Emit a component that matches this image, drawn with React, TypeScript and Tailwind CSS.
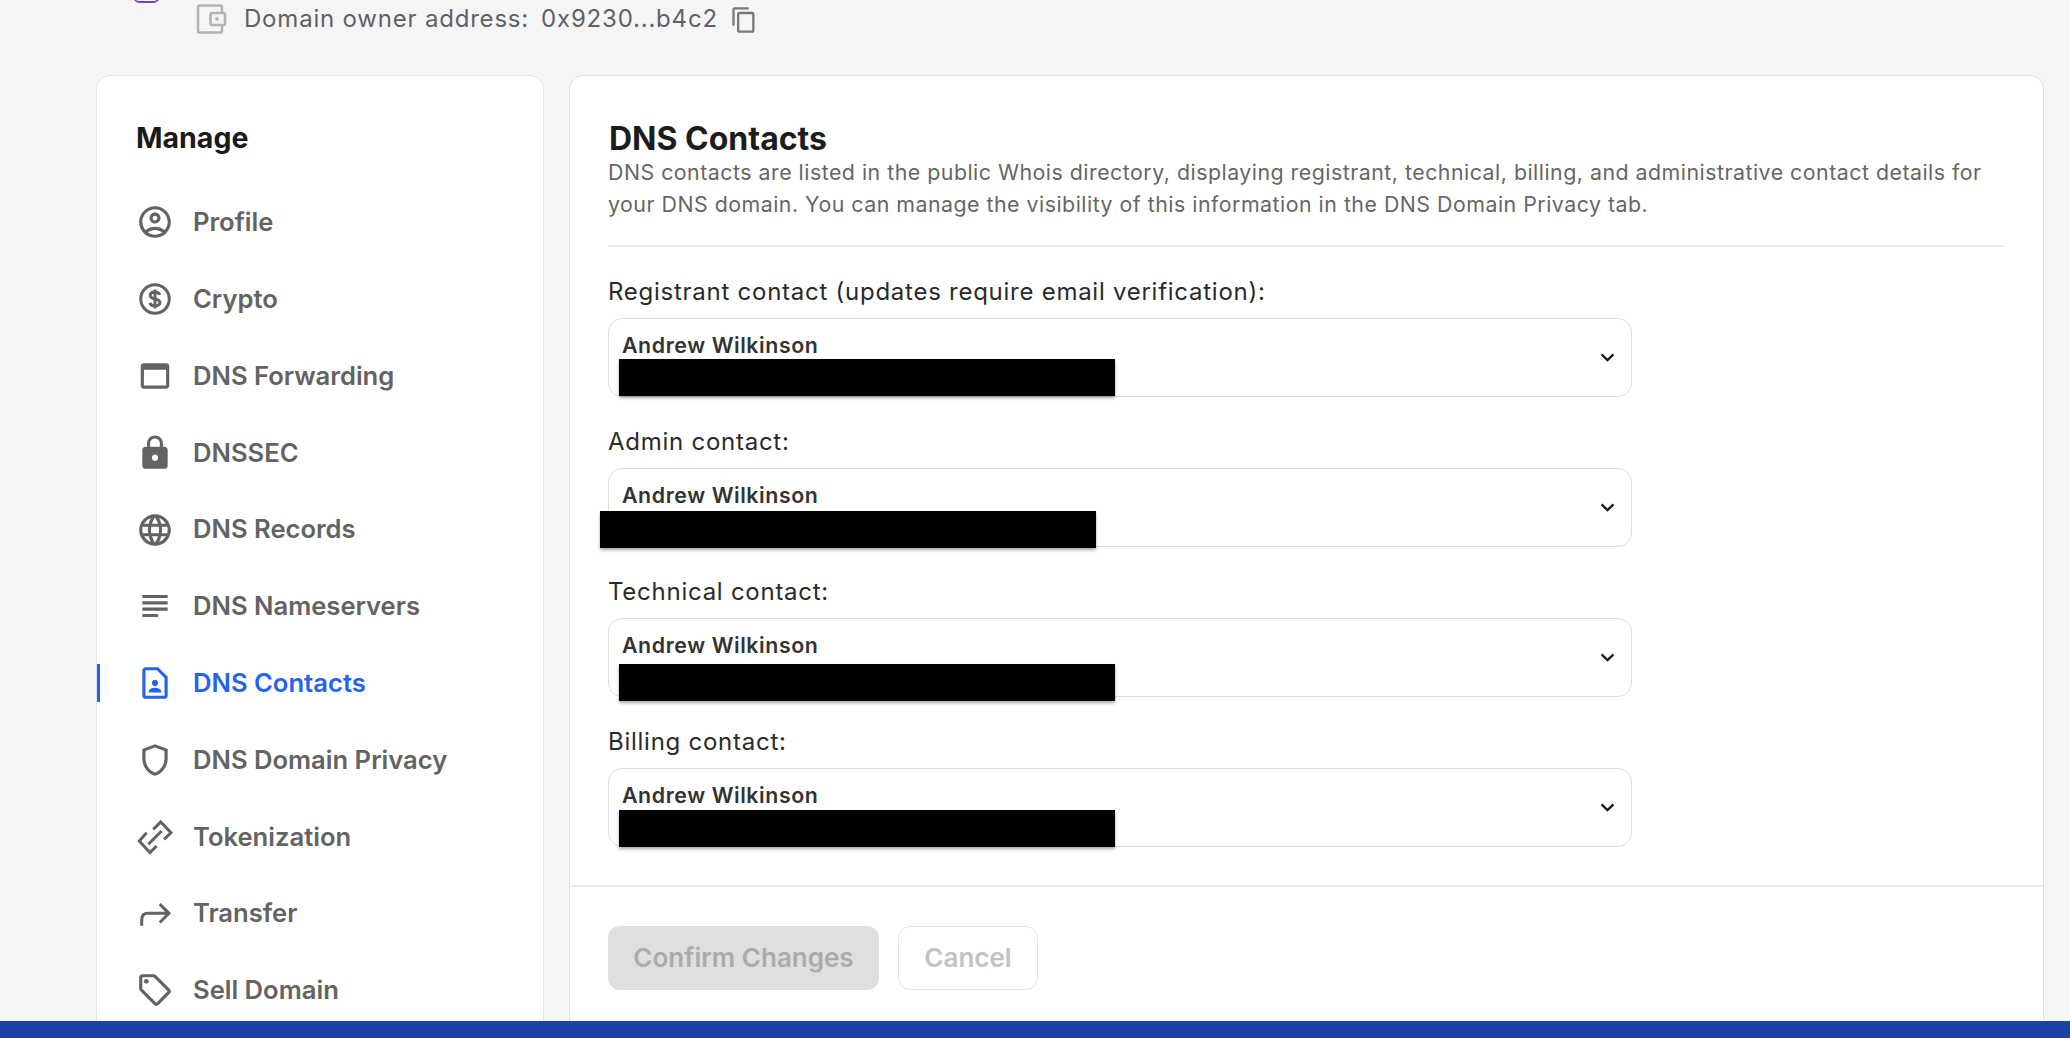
import React from "react";
import {
  MdOutlineAccountCircle,
  MdOutlineWebAsset,
  MdLock,
  MdOutlineLanguage,
  MdOutlineSubject,
  MdOutlineContactPage,
  MdOutlineShield,
  MdOutlineSell,
  MdOutlineContentCopy,
} from "react-icons/md";

function DollarIcon({ className }: { className?: string }) {
  return (
    <svg viewBox="0 0 24 24" className={className} fill="none" stroke="currentColor" strokeWidth="1.9">
      <circle cx="12" cy="12" r="9" />
      <path d="M15 9.4c-.4-1.2-1.5-1.8-3-1.8-1.8 0-3 .8-3 2.2 0 3.1 6.1 1.4 6.1 4.4 0 1.4-1.4 2.2-3.1 2.2-1.6 0-2.8-.7-3.1-2M12 6v12" />
    </svg>
  );
}
function LinkDiamondIcon({ className }: { className?: string }) {
  return (
    <svg viewBox="0 0 24 24" className={className} fill="none" stroke="currentColor" strokeWidth="1.9">
      <path d="M10.9 7.2 15.6 2.5l6.5 6.8-4.4 4.2M13 17.7 8.8 21.9l-6.7-7.4 4.6-5.2M7.8 16.6l8.4-8.4" />
    </svg>
  );
}
function TurnIcon({ className }: { className?: string }) {
  return (
    <svg viewBox="0 0 24 24" className={className} fill="none" stroke="currentColor" strokeWidth="1.9">
      <path d="M3.6 19.4v-3.6c0-2.6 1.4-4.2 4-4.2H20.4M15 5.8l5.8 5.8-5.8 5.8" />
    </svg>
  );
}
function WalletIcon({ className }: { className?: string }) {
  return (
    <svg viewBox="0 0 30 30" className={className} fill="none" stroke="currentColor" strokeWidth="2.6">
      <path d="M25.5 9V3.2a1.7 1.7 0 0 0-1.7-1.7H3.2a1.7 1.7 0 0 0-1.7 1.7v23.6a1.7 1.7 0 0 0 1.7 1.7h20.6a1.7 1.7 0 0 0 1.7-1.7V21" />
      <rect x="14" y="9" width="14.5" height="12" rx="1.5" />
      <circle cx="20.5" cy="15" r="1.8" fill="currentColor" stroke="none" />
    </svg>
  );
}
function Chevron({ className }: { className?: string }) {
  return (
    <svg viewBox="0 0 16 10" className={className} fill="none" stroke="currentColor" strokeWidth="2.6">
      <path d="M1.4 1.6 8 8l6.6-6.4" />
    </svg>
  );
}

const NAV = [
  { label: "Profile", Icon: MdOutlineAccountCircle },
  { label: "Crypto", Icon: DollarIcon },
  { label: "DNS Forwarding", Icon: MdOutlineWebAsset },
  { label: "DNSSEC", Icon: MdLock },
  { label: "DNS Records", Icon: MdOutlineLanguage },
  { label: "DNS Nameservers", Icon: MdOutlineSubject },
  { label: "DNS Contacts", Icon: MdOutlineContactPage, active: true },
  { label: "DNS Domain Privacy", Icon: MdOutlineShield },
  { label: "Tokenization", Icon: LinkDiamondIcon },
  { label: "Transfer", Icon: TurnIcon },
  { label: "Sell Domain", Icon: MdOutlineSell },
];

function ContactSelect({ label, redactClass }: { label: string; redactClass: string }) {
  return (
    <div className="flex flex-col">
      <label className="h-[32px] text-[24px] leading-[32px] tracking-[0.74px] text-[#2a2a2a] mb-[10px] whitespace-nowrap">{label}</label>
      <div className="relative h-[79px] w-[1024px] rounded-[14px] border border-[#dedede] bg-white pl-[13px] pr-[16px] flex items-center justify-between">
        <div className="self-start pt-[12px] text-[21.33px] leading-[28px] tracking-[0.6px] font-semibold text-[#333333]">Andrew Wilkinson</div>
        <Chevron className="w-[15px] h-[9px] text-[#1a1a1a]" />
        <div className={redactClass} />
      </div>
    </div>
  );
}

export default function App() {
  return (
    <div className="h-[1038px] w-[2070px] flex flex-col overflow-hidden bg-[#f5f5f5] font-['Inter',sans-serif]">
      <div className="flex-1 min-h-0 flex flex-col overflow-hidden">
        <div className="relative h-[75px] shrink-0 pl-[196px] pt-[3px]">
          <div className="absolute left-[133px] -top-[11px] w-[27px] h-[14px] rounded-full bg-white border-b-2 border-[#6d3fd6]" />
          <div className="flex items-center h-[31px] text-[24px] tracking-[0.8px] text-[#5f5f6b]">
            <WalletIcon className="w-[31px] h-[30px] text-[#b3b3b3]" />
            <span className="ml-[17px]">Domain owner address:</span>
            <span className="ml-[12px]">0x9230...b4c2</span>
            <MdOutlineContentCopy className="ml-[12px] w-[28px] h-[28px] text-[#77777f] mt-[2px]" />
          </div>
        </div>

        <div className="flex items-start pl-[96px] gap-[25px]">
          <aside className="w-[448px] shrink-0 h-[1000px] rounded-t-[14px] border border-[#e4e4ea] bg-white pt-[44px]">
            <h2 className="pl-[39px] text-[28.5px] leading-[36px] font-bold text-[#1a1a1a]">Manage</h2>
            <nav className="mt-[28px] flex flex-col">
              {NAV.map(({ label, Icon, active }) => (
                <div
                  key={label}
                  className={
                    active
                      ? "relative h-[76.8px] flex items-center pl-[39px] text-[#2563eb]"
                      : "relative h-[76.8px] flex items-center pl-[39px] text-[#636363]"
                  }
                >
                  {active && <div className="absolute left-0 top-[19px] h-[38px] w-[3px] bg-[#2563eb]" />}
                  <Icon className="w-[38px] h-[38px] shrink-0" />
                  <span className="ml-[19px] text-[25.6px] font-semibold whitespace-nowrap">{label}</span>
                </div>
              ))}
            </nav>
          </aside>

          <main className="w-[1475px] shrink-0 h-[1000px] rounded-t-[14px] border border-[#e0e0e6] bg-white">
            <div className="px-[38px] pt-[43px]">
              <h1 className="pl-[1px] text-[32px] leading-[40px] font-bold text-[#1d1d1d]">DNS Contacts</h1>
              <p className="-mt-[3px] text-[21.33px] leading-[32px] tracking-[0.5px] text-[#666666] w-[1396px]">
                DNS contacts are listed in the public Whois directory, displaying registrant, technical, billing, and administrative contact details for your DNS domain. You can manage the visibility of this information in the DNS Domain Privacy tab.
              </p>
              <div className="mt-[25px] h-[2px] bg-[#ececec]" />
              <div className="mt-[29px] flex flex-col gap-[29px]">
                <ContactSelect label="Registrant contact (updates require email verification):" redactClass="absolute left-[10px] top-[40px] w-[496px] h-[37px] bg-black shadow-[0_2px_3px_rgba(0,0,0,0.35)]" />
                <ContactSelect label="Admin contact:" redactClass="absolute -left-[9px] top-[42px] w-[496px] h-[37px] bg-black shadow-[0_2px_3px_rgba(0,0,0,0.35)]" />
                <ContactSelect label="Technical contact:" redactClass="absolute left-[10px] top-[45px] w-[496px] h-[37px] bg-black shadow-[0_2px_3px_rgba(0,0,0,0.35)]" />
                <ContactSelect label="Billing contact:" redactClass="absolute left-[10px] top-[41px] w-[496px] h-[37px] bg-black shadow-[0_2px_3px_rgba(0,0,0,0.35)]" />
              </div>
            </div>
            <div className="mt-[38px] h-[2px] bg-[#ececec]" />
            <div className="px-[38px] pt-[39px] flex gap-[19px]">
              <button className="h-[64px] w-[271px] pb-[2px] rounded-[12px] bg-[#dfdfdf] text-[26px] font-semibold text-[#ababab]">Confirm Changes</button>
              <button className="h-[64px] w-[140px] pb-[2px] rounded-[12px] border border-[#e3e3e3] bg-white text-[26px] font-semibold text-[#c2c2c2]">Cancel</button>
            </div>
          </main>
        </div>
      </div>
      <div className="h-[17px] shrink-0 bg-[#1d43ab]" />
    </div>
  );
}
